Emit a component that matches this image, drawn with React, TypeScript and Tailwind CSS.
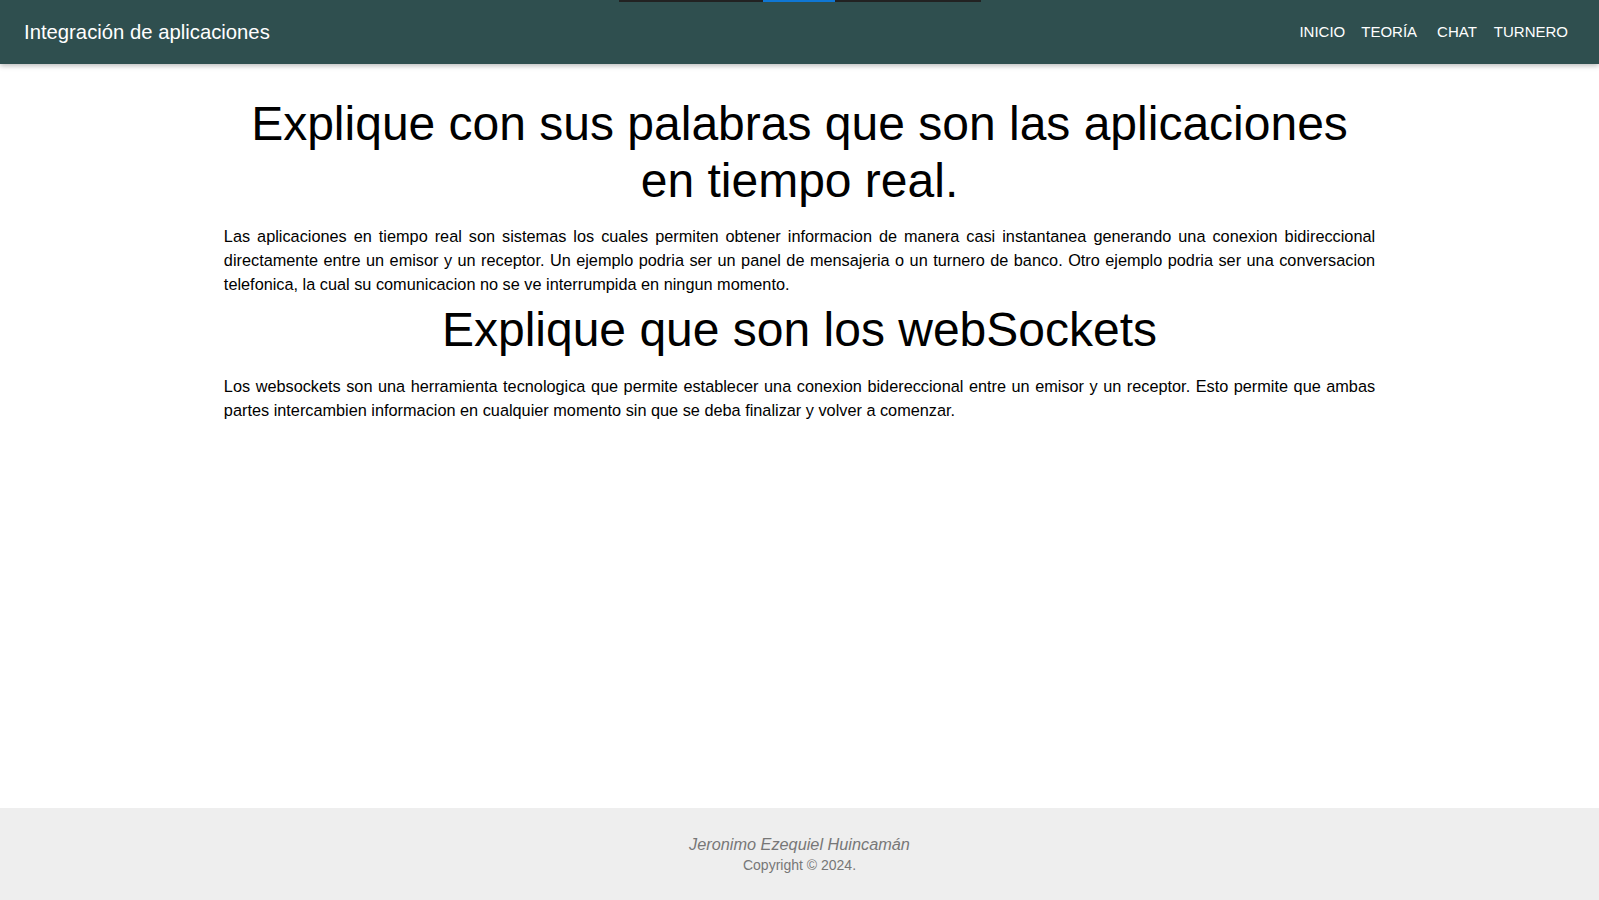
export default function App() {
  return (
    <div className="relative flex min-h-screen flex-col bg-white font-['Liberation_Sans',Arial,sans-serif] text-black">
      {/* loading bar overlay at the very top */}
      <div className="absolute left-[619px] top-0 z-20 flex h-[2px] w-[362px]">
        <div className="w-[144px] bg-[#222222]" />
        <div className="w-[72px] bg-[#0f77d4]" />
        <div className="flex-1 bg-[#222222]" />
      </div>

      {/* Navbar */}
      <nav className="relative z-10 flex h-16 items-center justify-between bg-[#2f4f4f] pl-6 pr-[21px] text-white shadow-[0_2px_5px_rgba(0,0,0,0.26)]">
        <a className="text-[20.3px] leading-none">Integración de aplicaciones</a>
        <ul className="flex items-center text-[15px]">
          <li><a className="px-[8px]">INICIO</a></li>
          <li><a className="pl-[8px] pr-[10px]">TEORÍA</a></li>
          <li><a className="pl-[10px] pr-[9.5px]">CHAT</a></li>
          <li><a className="pl-[7.5px] pr-[10px]">TURNERO</a></li>
        </ul>
      </nav>

      {/* Content */}
      <main className="mx-auto w-[72%] flex-1">
        <h1 className="mt-[31px] text-center text-[48px] leading-[57px]">
          Explique con sus palabras que son las aplicaciones en tiempo real.
        </h1>
        <p className="mt-[15px] text-justify text-[16.3px] leading-[24px]">
          Las aplicaciones en tiempo real son sistemas los cuales permiten obtener informacion de manera casi instantanea generando una conexion bidireccional directamente entre un emisor y un receptor. Un ejemplo podria ser un panel de mensajeria o un turnero de banco. Otro ejemplo podria ser una conversacion telefonica, la cual su comunicacion no se ve interrumpida en ningun momento.
        </p>
        <h2 className="mt-[5px] text-center text-[48px] leading-[57px]">
          Explique que son los webSockets
        </h2>
        <p className="mt-[16px] text-justify text-[16.3px] leading-[24px]">
          Los websockets son una herramienta tecnologica que permite establecer una conexion bidereccional entre un emisor y un receptor. Esto permite que ambas partes intercambien informacion en cualquier momento sin que se deba finalizar y volver a comenzar.
        </p>
      </main>

      {/* Footer */}
      <footer className="flex h-[92px] flex-col items-center justify-center bg-[#eeeeee] text-[#777777]">
        <p className="text-[16.3px] italic leading-[22px]">Jeronimo Ezequiel Huincamán</p>
        <p className="text-[14px] leading-[20px]">Copyright © 2024.</p>
      </footer>
    </div>
  );
}
